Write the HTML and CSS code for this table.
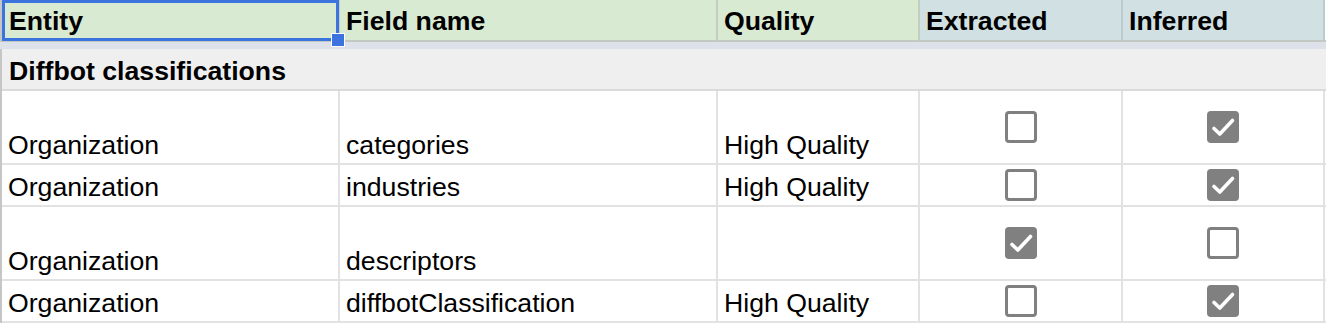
FILE: index.html
```html
<!DOCTYPE html>
<html>
<head>
<meta charset="utf-8">
<link rel="stylesheet" href="styles.css">
</head>
<body>
<div class="sheet">
  <div class="row head">
    <div class="cell hc green selected">Entity<span class="sel"><span class="handle"></span></span></div>
    <div class="cell hc green">Field name</div>
    <div class="cell hc green">Quality</div>
    <div class="cell hc blue">Extracted</div>
    <div class="cell hc blue">Inferred</div>
    <div class="cell hc tail"></div>
  </div>
  <div class="freeze"></div>
  <div class="row section">
    <div class="cell sec">Diffbot classifications</div>
  </div>
  <div class="row tall">
    <div class="cell">Organization</div>
    <div class="cell">categories</div>
    <div class="cell">High Quality</div>
    <div class="cell box"><span class="cb"></span></div>
    <div class="cell box"><span class="cb on"><svg viewBox="0 0 32 32"><path d="M7 17.5 L12.8 23 L25.5 9.5"/></svg></span></div>
    <div class="cell tail"></div>
  </div>
  <div class="row">
    <div class="cell">Organization</div>
    <div class="cell">industries</div>
    <div class="cell">High Quality</div>
    <div class="cell box"><span class="cb"></span></div>
    <div class="cell box"><span class="cb on"><svg viewBox="0 0 32 32"><path d="M7 17.5 L12.8 23 L25.5 9.5"/></svg></span></div>
    <div class="cell tail"></div>
  </div>
  <div class="row tall">
    <div class="cell">Organization</div>
    <div class="cell">descriptors</div>
    <div class="cell"></div>
    <div class="cell box"><span class="cb on"><svg viewBox="0 0 32 32"><path d="M7 17.5 L12.8 23 L25.5 9.5"/></svg></span></div>
    <div class="cell box"><span class="cb"></span></div>
    <div class="cell tail"></div>
  </div>
  <div class="row">
    <div class="cell">Organization</div>
    <div class="cell">diffbotClassification</div>
    <div class="cell">High Quality</div>
    <div class="cell box"><span class="cb"></span></div>
    <div class="cell box"><span class="cb on"><svg viewBox="0 0 32 32"><path d="M7 17.5 L12.8 23 L25.5 9.5"/></svg></span></div>
    <div class="cell tail"></div>
  </div>
</div>
</body>
</html>
```

FILE: styles.css
```css
html, body {
  margin: 0;
  padding: 0;
  background: #ffffff;
}

body {
  font-family: "Liberation Sans", Arial, sans-serif;
  font-size: 26.67px;
  color: #000000;
  overflow: hidden;
}

.sheet {
  width: 1326px;
}

.row {
  display: grid;
  grid-template-columns: 338px 378px 202px 203px 202px 3px;
  height: 42px;
  border-left: 2px solid #c6c6c6;
}

.row.tall {
  height: 74px;
}

.cell {
  display: flex;
  align-items: flex-end;
  padding: 0 6px 3px 6px;
  line-height: 30px;
  border-right: 2px solid #e2e2e2;
  border-bottom: 2px solid #e2e2e2;
  white-space: nowrap;
  overflow: visible;
  min-width: 0;
}

.cell.tail {
  border-right: none;
  padding: 0;
}

.head .cell {
  font-weight: bold;
  padding-bottom: 4px;
  border-right-color: #c3cec1;
  border-bottom-color: #c3c8c3;
}

.head .cell.tail {
  border-bottom-color: #c3c8c3;
  background: #ffffff;
}

.green {
  background: #d9ead3;
}

.blue {
  background: #d0e0e3;
}

.head .blue {
  border-right-color: #bccbce;
}

.selected {
  position: relative;
  padding-left: 7px;
}

.sel {
  position: absolute;
  left: 0;
  top: 0;
  right: -1px;
  bottom: -1px;
  border: 3px solid #3b74de;
  pointer-events: none;
}

.handle {
  position: absolute;
  right: -9px;
  bottom: -9px;
  width: 12px;
  height: 12px;
  background: #3b74de;
  border: 1px solid #ffffff;
}

.freeze {
  height: 7px;
  background: #dde1ea;
}

.row.section {
  grid-template-columns: 1fr;
  background: #efefef;
  height: 42px;
  border-left-color: #c6c6c6;
}

.cell.sec {
  font-weight: bold;
  border-right: none;
  border-bottom-color: #dadada;
  padding-left: 7px;
}

.cell.box {
  align-items: center;
  justify-content: center;
  padding: 0;
}

.cb {
  display: block;
  box-sizing: border-box;
  width: 32px;
  height: 32px;
  border: 3px solid #808080;
  border-radius: 4px;
  background: #ffffff;
}

.cb.on {
  border: none;
  background: #808080;
}

.cb svg {
  display: block;
  width: 32px;
  height: 32px;
}

.cb path {
  fill: none;
  stroke: #ffffff;
  stroke-width: 3.6;
  stroke-linecap: round;
  stroke-linejoin: round;
}
```
